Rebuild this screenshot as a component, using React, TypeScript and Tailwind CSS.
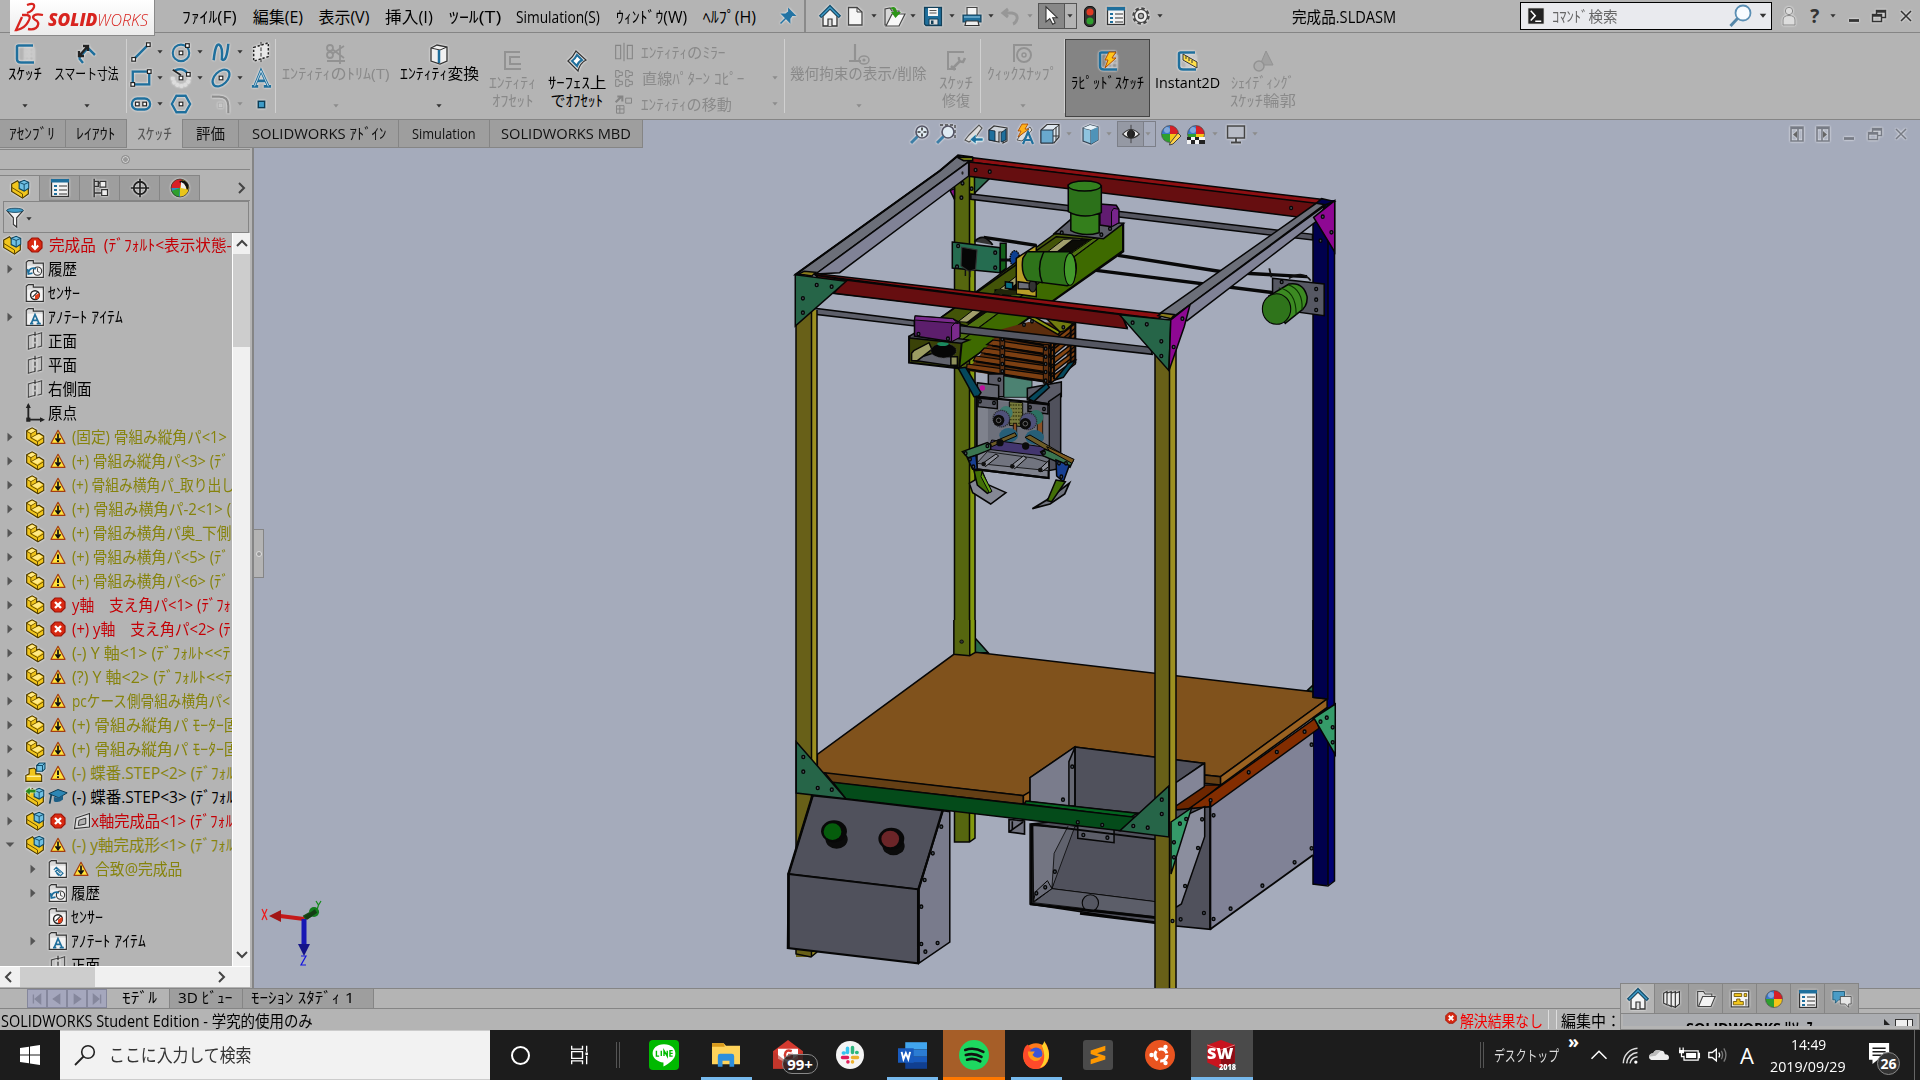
import { useLayoutEffect, useRef, type ReactNode } from "react";

/* Squeezes or stretches one line of text to the width of its box. */
function Fit({ children, className = "", w }: { children: ReactNode; className?: string; w?: number }) {
  const box = useRef<HTMLSpanElement>(null);
  const ink = useRef<HTMLSpanElement>(null);
  useLayoutEffect(() => {
    if (box.current && ink.current) {
      ink.current.style.transform = "none";
      const n = ink.current.offsetWidth;
      if (n > 0) ink.current.style.transform = `scaleX(${box.current.clientWidth / n})`;
    }
  });
  return (
    <span ref={box} style={w ? { width: w } : undefined} className={`block shrink-0 whitespace-pre ${className}`}>
      <span ref={ink} className="inline-block origin-left">{children}</span>
    </span>
  );
}

function Ico({ children, className = "size-6", box = "0 0 24 24" }: { children: ReactNode; className?: string; box?: string }) {
  return (
    <svg viewBox={box} className={`block shrink-0 overflow-visible ${className}`} fill="none">
      {children}
    </svg>
  );
}

const Arr = ({ className = "", dim = false }: { className?: string; dim?: boolean }) => (
  <Ico box="0 0 8 8" className={`size-2 ${className}`}>
    <path d="M1.4 2.2H6.6L4 5.4Z" fill={dim ? "#8c8c8c" : "#333"} />
  </Ico>
);

const B = "#1f6f9c";
const halo = "drop-shadow-[0_0_1px_#fff]";

/* ---------- shared icons ---------- */
const Home = () => (
  <Ico className={`size-6 ${halo}`}>
    <path d="M5 12V22H19V12L12 5Z" fill="#f4f4f4" stroke="#333" strokeWidth="1.3" />
    <path d="M2 13L12 3L22 13" stroke="#16506f" strokeWidth="3.4" />
    <path d="M3 12.2L12 3.5L21 12.2" stroke="#3f9cc8" strokeWidth="1.3" />
    <path d="M10 22V15H14V22" stroke="#333" strokeWidth="1.2" fill="#ddd" />
  </Ico>
);
const Panel = () => (
  <Ico className={`size-6 ${halo}`}>
    <rect x="3.5" y="3.5" width="17" height="17" fill="#f4f4f4" stroke="#333" strokeWidth="1.3" />
    <rect x="3" y="3" width="18" height="3.5" fill={B} />
    <path d="M6 9h3v2H6zM6 13h3v2H6zM6 17h3v2H6z" fill={B} />
    <path d="M11 10h8M11 14h8M11 18h8" stroke="#333" strokeWidth="1.2" />
  </Ico>
);
const Ball = ({ extra }: { extra?: ReactNode }) => (
  <Ico>
    <circle cx="12" cy="12" r="8.5" fill="#eee" />
    <path d="M12 12V3.5A8.5 8.5 0 0 1 20.5 12Z" fill="#d81f26" />
    <path d="M12 12H3.5A8.5 8.5 0 0 1 12 3.5Z" fill="#3c78c8" />
    <path d="M12 12H3.5A8.5 8.5 0 0 0 12 20.5Z" fill="#2ea02e" />
    <path d="M12 12H20.5A8.5 8.5 0 0 1 12 20.5Z" fill="#f5c518" />
    <circle cx="9" cy="8" r="3" fill="#fff" opacity=".35" />
    <circle cx="12" cy="12" r="8.5" stroke="#444" strokeWidth=".7" />
    {extra}
  </Ico>
);
const FeatureBall = () => (
  <Ico className={`size-6 ${halo}`}>
    <circle cx="12" cy="12" r="9" fill="#e9c51b" />
    <path d="M12 12L3 12A9 9 0 0 1 14 3.2Z" fill="#d81f26" />
    <path d="M12 12L3 12A9 9 0 0 0 12 21Z" fill="#2e8fc2" />
    <path d="M12 12L3.4 15A9 9 0 0 0 11 21Z" fill="#2ea02e" />
    <path d="M11 6Q15 2 19.500 7Q22 12 19 14Q18 8 11 6Z" fill="#111" />
    <path d="M13 6Q18 8 18 13L13 12Z" fill="#eee" />
    <circle cx="12" cy="12" r="9" stroke="#333" strokeWidth=".8" />
  </Ico>
);
const Part = () => (
  <Ico className={`size-5 ${halo}`}>
    <path d="M2 4.500L8.500 1L14 4V8.500L17 7.500L22.500 11V18.500L15.500 22.500L2 14Z" fill="#f2c61c" stroke="#4a3800" strokeWidth="1.4" />
    <path d="M2 5L7 8V13L15 17.500V22M7 8L14 4M7 13L14 9M15 17.500L22 13" stroke="#6a5000" strokeWidth="1.2" />
    <path d="M3.500 5L8.500 2.200L12.700 4.300L7.300 7.300ZM8.500 12.500L16.500 8.800L21 11.500L15 15.800Z" fill="#ffe984" />
  </Ico>
);
const Asm = ({ arrow = false }: { arrow?: boolean }) => (
  <Ico className={`size-5 ${halo}`}>
    <path d="M2 6L9 2L14 8L22 11V18L15 23L2 15Z" fill="#f2c61c" stroke="#4a3800" strokeWidth="1.4" />
    <path d="M2 10L15 18V23" stroke="#6a5000" strokeWidth="1.2" />
    <path d="M11 4L17 1.500L22.500 4V11L17 14.500L11 11.500Z" fill="#6fc0e4" stroke="#0c4460" strokeWidth="1.3" />
    <path d="M11 4L17 6.500L22.500 4M17 6.500V14.500" stroke="#0c4460" strokeWidth="1.1" />
    {arrow && <path d="M0 5L6 0V3H13V7H6V10Z" fill="#2b8a1c" stroke="#e8ffe0" strokeWidth=".6" />}
  </Ico>
);
const StepPart = () => (
  <Ico className={`size-5 ${halo}`}>
    <path d="M1 22V15L5 13V7L11 6L13 8V13H18L20 15V22Z" fill="#f2c61c" stroke="#4a3800" strokeWidth="1.4" />
    <path d="M2 16H19" stroke="#fff2a0" strokeWidth="1.5" />
    <path d="M14 3L17 0H24V7L21 10H14Z" fill="#6fc0e4" stroke="#0c4460" strokeWidth="1.3" />
    <path d="M14 3H21V10M21 3L24 0" stroke="#0c4460" strokeWidth="1.1" />
  </Ico>
);
const Warn = ({ bang = false }: { bang?: boolean }) => (
  <Ico className="size-4" box="0 0 16 16">
    <path d="M8 1.300L15 14.300H1Z" fill="#ffe23a" stroke="#a33c10" strokeWidth="1.2" strokeLinejoin="round" />
    {bang ? <path d="M8 5.500V10M8 11.300V13" stroke="#111" strokeWidth="1.9" /> : <path d="M8 4.500V12M5.500 9.300L8 12.500L10.500 9.300" stroke="#111" strokeWidth="1.7" />}
  </Ico>
);
const Err = ({ down = false, small = false }: { down?: boolean; small?: boolean }) => (
  <Ico className={small ? "size-3" : "size-4"} box="0 0 16 16">
    <path d="M5 1H11L15 5V11L11 15H5L1 11V5Z" fill="#d92a12" stroke="#a01408" strokeWidth="1.2" />
    {down ? <path d="M8 3.500V11M4.800 8.500L8 12L11.200 8.500" stroke="#fff" strokeWidth="2.100" /> : <path d="M5 5L11 11M11 5L5 11" stroke="#fff" strokeWidth="2.400" />}
  </Ico>
);
const Folder = ({ kind }: { kind: string }) => (
  <Ico className={`size-5 ${halo}`}>
    <path d="M1.500 22V4L4 2H10V5H22V22Z" fill="#d9d9d9" stroke="#333" strokeWidth="1.4" />
    <path d="M3 8H21V21H3Z" fill="#f3f3f3" />
    {kind === "history" && (
      <>
        <circle cx="15" cy="14.500" r="5" stroke="#333" strokeWidth="1.3" />
        <path d="M15 11V15L17.500 16" stroke="#333" />
        <path d="M4 17C5 11 10 10 13 12M3 12L4 18L9 17" stroke={B} strokeWidth="2" />
      </>
    )}
    {kind === "sensor" && (
      <>
        <circle cx="12" cy="14.500" r="5.300" fill="#fff" stroke="#222" strokeWidth="1.7" />
        <path d="M12 15L17 12A5 5 0 0 1 12 19.500Z" fill="#e0401c" />
        <path d="M9 17L15 11" stroke="#222" strokeWidth="1.3" />
      </>
    )}
    {kind === "note" && <path d="M6 20H10M14 20H19M7.500 20L12 9L17 20M9.300 16H15" stroke={B} strokeWidth="2" />}
    {kind === "mate" && <path d="M7 13L10 10L18 17L15 20L9 15L11 13L15 17M10 17L13 20" stroke={B} strokeWidth="1.4" />}
  </Ico>
);
const Plane = () => (
  <Ico className={`size-5 ${halo}`}>
    <path d="M9 4.500L4 6V22L9 20.500M15 3.500L20 2V18L15 19.500M4 6L9 4.500M20 2L15 3.500M9 20.500L12 19.700M9 4.500L15 3.500" stroke="#444" strokeWidth="1.3" fill="#c2c2c2" />
    <path d="M12 1V22" stroke="#222" strokeWidth="1.3" strokeDasharray="5 2" />
  </Ico>
);
const Origin = () => (
  <Ico className="size-5">
    <path d="M4 2V20H21" stroke="#222" strokeWidth="2.200" />
    <path d="M1 6L4 0L7 6ZM18 17L24 20L18 23Z" fill="#222" />
    <rect x="1.500" y="17.500" width="5" height="5" fill="#222" />
  </Ico>
);

/* ---------- title bar ---------- */
const menus: [string, string][] = [
  ["ﾌｧｲﾙ(F)", "w-[55px]"],
  ["編集(E)", "w-[50px]"],
  ["表示(V)", "w-[51px]"],
  ["挿入(I)", "w-[48px]"],
  ["ﾂｰﾙ(T)", "w-[52px]"],
  ["Simulation(S)", "w-[84px]"],
  ["ｳｨﾝﾄﾞｳ(W)", "w-[71px]"],
  ["ﾍﾙﾌﾟ(H)", "w-[53px]"],
];

function Restore({ color = "#333" }: { color?: string }) {
  return (
    <Ico className={`size-6 ${halo}`}>
      <path d="M9.500 10V6.500H18.500V13.500H15M9.500 8H18.500" stroke={color} strokeWidth="1.5" />
      <path d="M5.500 10.500H14.500V17.500H5.500ZM5.500 12H14.500" stroke={color} strokeWidth="1.5" />
    </Ico>
  );
}
const Min = ({ color = "#333" }: { color?: string }) => (
  <Ico className={`size-6 ${halo}`}><path d="M7 16.500H17" stroke={color} strokeWidth="2.800" /></Ico>
);
const Close = ({ color = "#333" }: { color?: string }) => (
  <Ico className={`size-6 ${halo}`}><path d="M7 7L17 17M17 7L7 17" stroke={color} strokeWidth="1.6" /></Ico>
);

function TitleBar() {
  return (
    <header className="flex h-[33px] items-center border-b border-[#858585] text-[16px] leading-[28px] text-black">
      <div className="relative z-10 ml-[10px] flex h-[36px] w-[145px] shrink-0 items-center self-start border-r border-b border-[#8a8a8a] bg-gradient-to-b from-white to-[#ececec] text-[#d8241f]">
        <Ico className="ml-[5px] h-[28px] w-[29px]" box="0 0 29 28">
          <path d="M12 1Q20 -2 19 3Q18 7 12 9" stroke="#d8241f" strokeWidth="2.300" />
          <path d="M7 11H12Q17 12 13 18Q10 24 2 26H1L7 13" stroke="#d8241f" strokeWidth="2.300" />
          <path d="M28 11Q19 9 18 13Q18 15 22 17Q25 20 21 24Q18 26 13 25" stroke="#d8241f" strokeWidth="2.300" />
        </Ico>
        <Fit className="ml-[4px] w-[49px] pt-1 text-[17px] font-extrabold italic">SOLID</Fit>
        <Fit className="w-[51px] pt-1 text-[17px] font-light italic">WORKS</Fit>
      </div>
      <nav className="ml-[27px] flex gap-x-[15.700px] pt-px">
        {menus.map(([t, w]) => (
          <Fit key={t} className={w}>{t}</Fit>
        ))}
      </nav>
      <Ico className={`ml-[22px] size-5 ${halo}`}>
        <path d="M13 4L20 11L17 11L14 15L14 19L5 10L9 10L13 7ZM9 15L3 21" fill="#2474a4" stroke="#2474a4" strokeWidth="1.8" />
      </Ico>
      <div className="ml-[6px] h-[32px] w-[2px] bg-[#8a8a8a]" />
      <div className="ml-[12px] flex items-center">
        <Home />
        <Ico className={`ml-px size-6 ${halo}`}><path d="M5.500 3.500H14L19 8V21H5.500Z" fill="#f6f6f6" stroke="#444" strokeWidth="1.3" /><path d="M14 3.500V8H19" stroke="#444" /></Ico>
        <Arr className="ml-[3px]" />
        <Ico className={`ml-1 size-6 ${halo}`}><path d="M3 21V5L8 4L10 7H17V21Z" fill="#d8d8d8" stroke="#444" strokeWidth="1.2" /><path d="M4 22L10 10H23L17 22Z" fill="#f8f8f8" stroke="#444" strokeWidth="1.2" /><path d="M8 4Q14 1 15 8H19L13.500 14L9 8H12Q11 5 8 4Z" fill="#2d9418" /></Ico>
        <Arr className="ml-[3px]" />
        <Ico className={`ml-1 size-6 ${halo}`}><path d="M3.500 3.500H20.500V21.500H5L3.500 20Z" fill={B} stroke="#123f58" strokeWidth="1.3" /><path d="M7 4H17V12H7Z" fill="#f4f4f4" /><path d="M8.500 6.500H15.500M8.500 9H15.500" stroke="#555" /><path d="M8 15H17V21H8Z" fill="#ddd" stroke="#123f58" /><path d="M10 16.500H12.500V20H10Z" fill="#123f58" /></Ico>
        <Arr className="ml-[3px]" />
        <Ico className={`ml-1 size-6 ${halo}`}><path d="M7 11V3.500H17V11" fill="#f4f4f4" stroke="#444" strokeWidth="1.2" /><path d="M3 11H21V18H3Z" fill={B} stroke="#123f58" strokeWidth="1.2" /><path d="M4 13H20" stroke="#9bd0ea" /><path d="M6 17H18L19 21.500H5Z" fill="#eee" stroke="#333" strokeWidth="1.2" /></Ico>
        <Arr className="ml-[3px]" />
        <Ico className="ml-1 size-6"><path d="M9 5L4 9L9 13M5 9H13Q19 10 18 15Q17 19 14 20" stroke="#979797" strokeWidth="3" /></Ico>
        <Arr dim className="ml-[3px]" />
        <div className="ml-[4px] flex h-[26px] w-[39px] items-center border border-[#555] bg-[#b4b4b4]">
          <div className="flex h-full w-[26px] items-center justify-center border-r border-[#555] bg-[#888]">
            <Ico className="size-5"><path d="M6 1V19L10.500 15L14 22L17 20.500L14 14H19.500Z" fill="#fff" stroke="#333" strokeWidth="1.3" /></Ico>
          </div>
          <Arr className="ml-px" />
        </div>
        <Ico className="ml-px size-6"><rect x="6.500" y="2.500" width="11" height="20" rx="4.500" fill="#333" stroke="#111" /><circle cx="12" cy="8" r="3.500" fill="#e03a24" /><circle cx="12" cy="17" r="3.500" fill="#2f9e2f" /></Ico>
        <div className="ml-[2px]"><Panel /></div>
        <Ico className={`ml-px size-6 ${halo}`}><circle cx="12" cy="12" r="7.500" stroke="#444" strokeWidth="2.500" strokeDasharray="3.400 2.500" /><circle cx="12" cy="12" r="6.500" fill="#eee" stroke="#444" strokeWidth="1.2" /><circle cx="12" cy="12" r="2.600" fill="#b4b4b4" stroke="#444" strokeWidth="1.2" /></Ico>
        <Arr className="ml-[3px]" />
      </div>
      <Fit className="ml-[128px] w-[104px] pt-px text-[16px]">完成品.SLDASM</Fit>
      <div className="ml-[124px] flex h-[28px] w-[252px] shrink-0 items-center border border-black bg-[#e9eaee]">
        <Ico className="ml-[6px] size-[18px]"><rect x="1" y="1" width="22" height="22" fill="#222" stroke="#eee" strokeWidth="1.5" /><path d="M5 5L11 11.500L5 18M11 19H19" stroke="#fff" strokeWidth="2" /></Ico>
        <Fit className="ml-[7px] w-[66px] text-[15px] leading-[24px] text-[#666]">ｺﾏﾝﾄﾞ検索</Fit>
        <Ico className="ml-[110px] size-6"><circle cx="15" cy="9" r="7.500" fill="#f7fbff" stroke="#5b8fb4" strokeWidth="1.800" /><path d="M9.500 14.500L2.500 22" stroke="#5586a8" strokeWidth="3" /></Ico>
        <Arr className="ml-[7px] scale-125" />
      </div>
      <Ico className={`ml-[5px] size-6 ${halo}`}><circle cx="12" cy="7" r="3.700" fill="#ddd" stroke="#888" /><path d="M6 21V16Q6 11.500 12 11.500Q18 11.500 18 16V21Z" fill="#ddd" stroke="#888" /></Ico>
      <span className="ml-[6px] w-4 text-center text-[19px] font-bold text-[#333]">?</span>
      <Arr className="ml-[6px]" />
      <div className="ml-[5px]"><Min /></div>
      <div className="ml-px"><Restore /></div>
      <div className="ml-[3px]"><Close /></div>
    </header>
  );
}

/* ---------- ribbon ---------- */
function Cmd({ w, icon, lines, low = false, arrow = false, dim = false, on = false }: { w: string; icon: ReactNode; lines: [string, string][]; low?: boolean; arrow?: boolean; dim?: boolean; on?: boolean }) {
  return (
    <div className={`relative flex h-full shrink-0 flex-col items-center ${w} ${dim ? "text-[#8a8a8a]" : "text-black"}`}>
      {on && <div className="absolute inset-x-0 top-[6px] bottom-[2px] border border-[#444] bg-[#848484]" />}
      <div className={`relative flex flex-col items-center ${low ? "pt-[16px]" : "pt-[9px]"}`}>
        <div className={dim ? "opacity-70" : halo}>{icon}</div>
        {lines.map(([t, lw]) => (
          <Fit key={t} className={`text-[15px] leading-[18px] ${lw} ${low ? "" : "-mt-[2px]"}`}>{t}</Fit>
        ))}
      </div>
      {arrow && <Arr dim={dim} className="absolute top-[69px]" />}
    </div>
  );
}
const Sep = () => <div className="my-[6px] w-px shrink-0 bg-[#d0d0d0]" />;

const SketchI = ({ c = B, children }: { c?: string; children?: ReactNode }) => (
  <Ico>
    <path d="M12 6H21V19H12Z" stroke="#c8c8c8" strokeWidth=".8" />
    <path d="M16 6V19M12 10H21M12 14H21" stroke="#c8c8c8" strokeWidth=".8" />
    <path d="M20 3.500H5.500Q4 3.500 4 5V17Q4 20.500 8 20.500H21" stroke={c} strokeWidth="2.600" />
    {children}
  </Ico>
);
const sq = (x: number, y: number) => <rect x={x - 2} y={y - 2} width="4" height="4" fill="#fff" stroke="#222" strokeWidth="1.3" />;
const Tool = ({ children, arrow, dim = false }: { children: ReactNode; arrow?: boolean; dim?: boolean }) => (
  <div className="flex h-[26px] w-10 items-center">
    <Ico className={`size-[22px] ${halo}`}>{children}</Ico>
    {arrow && <Arr dim={dim} className="ml-[4px]" />}
  </div>
);
function ToolGrid() {
  return (
    <div className="grid h-[78px] w-[148px] shrink-0 grid-cols-[40px_40px_40px_28px] pt-[6px] pl-[3px]">
      <Tool arrow><path d="M4 20L20 4" stroke={B} strokeWidth="2.800" />{sq(4, 20)}{sq(20, 4)}</Tool>
      <Tool arrow><circle cx="12" cy="13" r="9" stroke={B} strokeWidth="2.300" />{sq(12, 13)}{sq(19, 5)}</Tool>
      <Tool arrow><path d="M4 21Q6 2 10 4T13 20Q18 24 20 3" stroke={B} strokeWidth="2.800" /></Tool>
      <Tool><path d="M4 7L20 2V17L4 22Z" fill="#e8e8e8" stroke="#222" strokeWidth="1.6" strokeDasharray="2.500 2" /><path d="M12 1V23" stroke="#222" strokeDasharray="4 2" /></Tool>
      <Tool arrow><rect x="3" y="5" width="18" height="14" stroke={B} strokeWidth="2.600" />{sq(3, 19)}{sq(21, 5)}</Tool>
      <Tool arrow><path d="M3 11A9 9 0 1 0 21 12" stroke="#ddd" strokeWidth="4" strokeDasharray="3 1.500" /><path d="M5 4Q14 0 19 7" stroke={B} strokeWidth="2.600" />{sq(12, 12)}{sq(20, 8)}<path d="M3 3L12 9" stroke="#222" strokeWidth="2" /></Tool>
      <Tool arrow><ellipse cx="12" cy="12" rx="11" ry="7" transform="rotate(-45 12 12)" stroke={B} strokeWidth="2.500" />{sq(12, 12)}</Tool>
      <Tool><path d="M2 21H9M15 21H23M5 21L12 4L20 21M8 15H17" stroke={B} strokeWidth="3" /><path d="M5 21L12 4L20 21" stroke="#fff" strokeWidth=".8" /></Tool>
      <Tool arrow><rect x="2" y="6" width="20" height="12" rx="6" stroke={B} strokeWidth="2.500" />{sq(8, 12)}{sq(16, 12)}</Tool>
      <Tool><path d="M7 3H17L22 12L17 21H7L2 12Z" stroke={B} strokeWidth="2.500" />{sq(12, 12)}</Tool>
      <Tool arrow dim><path d="M2 4H10Q20 4 20 14V22" stroke="#8c8c8c" strokeWidth="2.400" /><path d="M9 11H14V16H9Z" stroke="#aaa" /></Tool>
      <Tool><rect x="9" y="9" width="7" height="7" fill="#3f9cc8" stroke="#0c3c56" strokeWidth="1.600" /></Tool>
    </div>
  );
}
const G = "#858585";
function Ribbon() {
  return (
    <section className="flex h-[86px] shrink-0">
      <Cmd w="w-[50px]" icon={<SketchI />} lines={[["ｽｹｯﾁ", "w-[34px]"]]} arrow />
      <Cmd w="w-[73px]" icon={<Ico><path d="M4 16L8 21M4 16L13 6L20 13" stroke={B} strokeWidth="2.500" /><path d="M5 13L12 5M4 9V14H9M8 4H13V9" stroke="#222" strokeWidth="2.400" /></Ico>} lines={[["スマート寸法", "w-[65px]"]]} arrow />
      <div className="w-[3px]" />
      <Sep />
      <ToolGrid />
      <Sep />
      <div className="w-[2px]" />
      <Cmd dim w="w-[116px]" icon={<Ico><circle cx="6" cy="6" r="3" stroke={G} strokeWidth="1.800" /><circle cx="6" cy="13" r="3" stroke={G} strokeWidth="1.800" /><path d="M8 7L20 16M8 12L20 4M3 19H21M16 3V22" stroke={G} strokeWidth="1.800" /></Ico>} lines={[["ｴﾝﾃｨﾃｨのﾄﾘﾑ(T)", "w-[108px]"]]} arrow />
      <Cmd w="w-[90px]" icon={<Ico><path d="M4 6L10 3L20 5V19L13 22L4 19Z" fill="#f1f1f1" stroke="#333" strokeWidth="1.3" /><path d="M4 6L13 8L20 5" stroke="#333" /><path d="M12 8V21" stroke={B} strokeWidth="2.500" /></Ico>} lines={[["ｴﾝﾃｨﾃｨ変換", "w-[79px]"]]} arrow />
      <Cmd dim low w="w-[57px]" icon={<Ico><path d="M19 3H4V20H20M19 8H9V15H20" stroke={G} strokeWidth="2" /></Ico>} lines={[["ｴﾝﾃｨﾃｨ", "w-[47px]"], ["ｵﾌｾｯﾄ", "w-[42px]"]]} />
      <Cmd low w="w-[72px]" icon={<Ico><path d="M3 12Q8 8 11 2L21 11Q15 14 13 22Z" fill="#ddd" stroke="#333" strokeWidth="1.3" /><path d="M7 12Q10 10 12 6L17 11Q13 13 12 17Z" fill="#fff" stroke={B} strokeWidth="2" /></Ico>} lines={[["ｻｰﾌｪｽ上", "w-[59px]"], ["でｵﾌｾｯﾄ", "w-[53px]"]]} />
      <div className="flex w-[171px] shrink-0 flex-col pt-[6px] pl-px text-[15px] leading-[26px] text-[#8a8a8a]">
        <div className="flex h-[26px] items-center"><Ico className="size-5"><path d="M2 4V20H8V4ZM22 4V20H16V4ZM12 1V23" stroke={G} strokeWidth="1.300" /></Ico><Fit className="ml-[7px] w-[85px]">ｴﾝﾃｨﾃｨのﾐﾗｰ</Fit></div>
        <div className="flex h-[26px] items-center"><Ico className="size-5"><path d="M2 3H6V5H10V9H6V11H2ZM14 3H18V5H22V9H18V11H14ZM2 14H6V16H10V20H6V22H2ZM14 14H18V16H22V20H18V22H14Z" stroke={G} strokeWidth="1.200" /></Ico><Fit className="ml-[8px] w-[102px]">直線ﾊﾟﾀｰﾝ ｺﾋﾟｰ</Fit><Arr dim className="ml-[27px]" /></div>
        <div className="flex h-[26px] items-center"><Ico className="size-5"><path d="M2 10L9 3M4 3H10V9" stroke={G} strokeWidth="2.500" /><path d="M14 5H21V11H14ZM3 14H12V23H3ZM7 14V23M3 18H12" stroke={G} strokeWidth="1.200" /></Ico><Fit className="ml-[7px] w-[91px]">ｴﾝﾃｨﾃｨの移動</Fit><Arr dim className="ml-[39px]" /></div>
      </div>
      <Sep />
      <Cmd dim w="w-[147px]" icon={<Ico><path d="M8 2V19M2 19H14" stroke={G} strokeWidth="2.200" /><ellipse cx="17" cy="18" rx="5" ry="4" stroke={G} strokeWidth="1.500" /><circle cx="17" cy="18" r="1.600" fill={G} /></Ico>} lines={[["幾何拘束の表示/削除", "w-[137px]"]]} arrow />
      <Cmd dim low w="w-[48px]" icon={<Ico><path d="M20 3H4V20H12" stroke={G} strokeWidth="2" /><path d="M9 19L16 12M15 8Q14 13 19 13L21 9M7 17L11 21" stroke={G} strokeWidth="2.500" /></Ico>} lines={[["ｽｹｯﾁ", "w-[34px]"], ["修復", "w-[28px]"]]} />
      <Sep />
      <Cmd dim w="w-[83px]" icon={<Ico><path d="M3 20V3H21" stroke={G} strokeWidth="2" /><circle cx="13" cy="13" r="7" stroke={G} strokeWidth="2" /><circle cx="13" cy="13" r="2" stroke={G} strokeWidth="1.500" /></Ico>} lines={[["ｸｨｯｸｽﾅｯﾌﾟ", "w-[71px]"]]} arrow />
      <Sep />
      <Cmd on low w="w-[85px]" icon={<SketchI><path d="M13 3H20L16 9H20L9 19L12 11H9Z" fill="#ffc61a" stroke="#b04a00" /></SketchI>} lines={[["ﾗﾋﾟｯﾄﾞｽｹｯﾁ", "w-[73px]"]]} />
      <Cmd low w="w-[74px]" icon={<SketchI><path d="M8 5L22 13V19L8 11Z" fill="#ffe04a" stroke="#333" /><path d="M11 7V10M14 9V12M17 11V14" stroke="#333" /></SketchI>} lines={[["Instant2D", "w-[65px]"]]} />
      <Cmd dim low w="w-[78px]" icon={<Ico><path d="M15 2L22 16H9Z" fill="#999" stroke={G} /><circle cx="8" cy="17" r="5" fill="#aaa" stroke={G} strokeWidth="1.500" /></Ico>} lines={[["ｼｪｲﾃﾞｨﾝｸﾞ", "w-[64px]"], ["ｽｹｯﾁ輪郭", "w-[66px]"]]} />
    </section>
  );
}

/* ---------- ribbon tabs + view toolbar ---------- */
const tabs: [string, string, string, boolean][] = [
  ["ｱｾﾝﾌﾞﾘ", "w-[66px] pr-[2px]", "w-[46px]", false],
  ["ﾚｲｱｳﾄ", "w-[61px]", "w-[40px]", false],
  ["ｽｹｯﾁ", "w-[56px]", "w-[35px]", true],
  ["評価", "w-[56px]", "w-[29px]", false],
  ["SOLIDWORKS ｱﾄﾞｲﾝ", "w-[160px]", "w-[134px]", false],
  ["Simulation", "w-[91px]", "w-[64px]", false],
  ["SOLIDWORKS MBD", "w-[153px]", "w-[130px]", false],
];
const Lens = ({ dash = false }: { dash?: boolean }) => (
  <Ico className={`size-6 ${halo}`}>
    {dash && <path d="M6 3H21V18" stroke="#444" strokeWidth="1.3" strokeDasharray="3 2" />}
    <circle cx="14" cy="10" r="6" fill="#dfeaf2" stroke="#556" strokeWidth="1.700" />
    {!dash && <path d="M14 5.500V14.500M9.500 10H18.500" stroke="#333" strokeWidth="1.600" strokeDasharray="3 3" />}
    <path d="M9.500 14.500L3 21" stroke="#3d7ea6" strokeWidth="3" />
  </Ico>
);
function TabRow() {
  return (
    <div className="flex h-[29px] shrink-0 bg-[#a5abbb]">
      {tabs.map(([t, w, tw, on]) => (
        <div key={t} className={`flex shrink-0 items-center justify-center border-r border-[#858585] pb-[2px] text-[15px] leading-[24px] ${w} ${on ? "bg-[#b4b4b4] text-[#555]" : "border-y bg-[#9e9e9e] text-[#111]"}`}>
          <Fit className={tw}>{t}</Fit>
        </div>
      ))}
      <div className="flex flex-1 items-center border-t border-[#858585] pl-[265px]">
        <Lens />
        <div className="ml-[2px]"><Lens dash /></div>
        <Ico className={`ml-[3px] size-6 ${halo}`}><path d="M4 18L8 13L18 3L21 6L14 16L8 20Z" fill="#ddd" stroke="#555" strokeWidth="1.200" /><path d="M22 16H15V12L9 17.500L15 22V19H22Z" fill={B} stroke="#dff" strokeWidth=".6" /></Ico>
        <Ico className={`ml-px size-6 ${halo}`}><path d="M3 8L8 4L21 6V19L17 21V10L13 10V20L3 18Z" fill="#cfd4da" stroke="#333" strokeWidth="1.200" /><path d="M3 8L9 9V19L3 18ZM15 11L20 7V18L15 20Z" fill={B} stroke="#123" strokeWidth=".8" /></Ico>
        <Ico className={`ml-[2px] size-6 ${halo}`}><path d="M5 18L9 12L18 5L20 8L10 19Z" fill="#ddd" stroke="#555" /><path d="M10 2H16L13 7H17L6 15L9 9H6Z" fill="#ffb01a" stroke="#a04000" strokeWidth=".8" /><path d="M11 22L16 10L21 22M13 18H19" stroke={B} strokeWidth="2.200" /></Ico>
        <Ico className={`ml-[2px] size-6 ${halo}`}><path d="M3 8L9 2.500H21V15L16 21H3Z" fill="#dde6ee" stroke="#333" strokeWidth="1.200" /><path d="M3 8H15V21H3Z" fill="#69a9cd" stroke="#234" /><path d="M15 8L21 3M18 5V18M15 14H21" stroke="#333" /></Ico>
        <Arr dim className="ml-[3px]" />
        <Ico className={`ml-[5px] size-6 ${halo}`}><path d="M5 6L12 3L20 5V18L13 22L5 19Z" fill="#8fc4df" stroke="#345" strokeWidth="1.200" /><path d="M5 6L13 8V22M13 8L20 5" stroke="#345" /><path d="M13 8V22L20 18V5Z" fill="#4f93b8" /><path d="M5 6L12 3L20 5L13 8Z" fill="#e6f2f8" /></Ico>
        <Arr dim className="ml-[3px]" />
        <div className="ml-[4px] flex h-[26px] w-[39px] items-center border border-[#7c7f88] bg-[#a5abbb]">
          <div className="flex h-full w-[26px] items-center justify-center border-r border-[#7c7f88] bg-[#9599a4]">
            <Ico className="size-5"><path d="M2 12Q12 1 22 12Q12 22 2 12Z" fill="#f2f2f2" stroke="#333" strokeWidth="1.300" /><circle cx="12" cy="12" r="5" fill="#222" /><path d="M12 1V23" stroke="#333" /></Ico>
          </div>
          <Arr dim />
        </div>
        <div className="ml-[2px]"><Ball extra={<path d="M12 21L20 11L23 14L15 22L11.500 23Z" fill="#ffd24a" stroke="#444" />} /></div>
        <div className="ml-[2px]"><Ball extra={<><path d="M3 15H21V22H3Z" fill="#f4f4f4" /><path d="M3 15h4v3H3zM11 15h4v3h-4zM7 18h4v4H7zM15 18h6v4h-6z" fill="#222" /></>} /></div>
        <Arr dim className="ml-[3px]" />
        <Ico className={`ml-[5px] size-6 ${halo}`}><rect x="3.500" y="4" width="17" height="12" fill="#b8bcc6" stroke="#444" strokeWidth="1.500" /><path d="M12 16V20M7 20.500H17" stroke="#444" strokeWidth="1.800" /></Ico>
        <Arr dim className="ml-[3px]" />
        <div className="ml-auto flex items-center gap-x-[2px] pr-[7px]">
          <Ico className={`size-6 ${halo}`}><path d="M6 5H18V19H6ZM6 6.500H18M13 6V19" stroke="#777b85" strokeWidth="1.600" /><path d="M12 9V16L8 12.500Z" fill="#666" /></Ico>
          <Ico className={`size-6 ${halo}`}><path d="M6 5H18V19H6ZM6 6.500H18M11 6V19" stroke="#777b85" strokeWidth="1.600" /><path d="M12 9V16L16 12.500Z" fill="#666" /></Ico>
          <Min color="#777b85" />
          <Restore color="#777b85" />
          <Close color="#777b85" />
        </div>
      </div>
    </div>
  );
}

/* ---------- feature tree ---------- */
type Row = { t: string; w: number; i: string; s?: string; c?: string; a?: string; lv?: number };
const Y = "text-[#86830c]";
const R = "text-[#c40006]";
const rows: Row[] = [
  { t: "履歴", w: 29, i: "history", a: ">" },
  { t: "ｾﾝｻｰ", w: 32, i: "sensor" },
  { t: "ｱﾉﾃｰﾄ ｱｲﾃﾑ", w: 75, i: "note", a: ">" },
  { t: "正面", w: 29, i: "plane" },
  { t: "平面", w: 29, i: "plane" },
  { t: "右側面", w: 44, i: "plane" },
  { t: "原点", w: 29, i: "origin" },
  { t: "(固定) 骨組み縦角パ<1>", w: 155, i: "part", s: "w", c: Y, a: ">" },
  { t: "(+) 骨組み縦角パ<3> (ﾃﾞ", w: 157, i: "part", s: "w", c: Y, a: ">" },
  { t: "(+) 骨組み横角パ_取り出し", w: 163, i: "part", s: "w", c: Y, a: ">" },
  { t: "(+) 骨組み横角パ-2<1> (", w: 159, i: "part", s: "w", c: Y, a: ">" },
  { t: "(+) 骨組み横角パ奥_下側", w: 159, i: "part", s: "w", c: Y, a: ">" },
  { t: "(+) 骨組み横角パ<5> (ﾃﾞ", w: 157, i: "part", s: "b", c: Y, a: ">" },
  { t: "(+) 骨組み横角パ<6> (ﾃﾞ", w: 157, i: "part", s: "b", c: Y, a: ">" },
  { t: "y軸　支え角パ<1> (ﾃﾞﾌｫ", w: 159, i: "part", s: "e", c: R, a: ">" },
  { t: "(+) y軸　支え角パ<2> (ﾃ", w: 159, i: "part", s: "e", c: R, a: ">" },
  { t: "(-) Y 軸<1> (ﾃﾞﾌｫﾙﾄ<<ﾃ", w: 159, i: "part", s: "w", c: Y, a: ">" },
  { t: "(?) Y 軸<2> (ﾃﾞﾌｫﾙﾄ<<ﾃ", w: 160, i: "part", s: "w", c: Y, a: ">" },
  { t: "pcケース側骨組み横角パ<", w: 158, i: "part", s: "w", c: Y, a: ">" },
  { t: "(+) 骨組み縦角パ ﾓｰﾀｰ固", w: 168, i: "part", s: "w", c: Y, a: ">" },
  { t: "(+) 骨組み縦角パ ﾓｰﾀｰ固", w: 168, i: "part", s: "w", c: Y, a: ">" },
  { t: "(-) 蝶番.STEP<2> (ﾃﾞﾌｫﾙ", w: 162, i: "step", s: "b", c: Y, a: ">" },
  { t: "(-) 蝶番.STEP<3> (ﾃﾞﾌｫﾙ", w: 162, i: "asma", s: "g", a: ">" },
  { t: "x軸完成品<1> (ﾃﾞﾌｫﾙ", w: 142, i: "asm", s: "ex", c: R, a: ">" },
  { t: "(-) y軸完成形<1> (ﾃﾞﾌｫﾙ", w: 162, i: "asm", s: "w", c: Y, a: "v" },
  { t: "合致@完成品", w: 87, i: "mate", s: "w", c: Y, a: ">", lv: 1 },
  { t: "履歴", w: 29, i: "history", a: ">", lv: 1 },
  { t: "ｾﾝｻｰ", w: 32, i: "sensor", lv: 1 },
  { t: "ｱﾉﾃｰﾄ ｱｲﾃﾑ", w: 75, i: "note", a: ">", lv: 1 },
  { t: "正面", w: 29, i: "plane", lv: 1 },
];
function RowIcon({ i }: { i: string }) {
  if (i === "part") return <Part />;
  if (i === "asm") return <Asm />;
  if (i === "asma") return <Asm arrow />;
  if (i === "step") return <StepPart />;
  if (i === "plane") return <Plane />;
  if (i === "origin") return <Origin />;
  return <Folder kind={i} />;
}
function TreeRow({ r }: { r: Row }) {
  return (
    <div className={`flex h-6 shrink-0 items-center text-[15.500px] leading-6 ${r.lv ? "pl-[28px]" : "pl-[5px]"} ${r.c ?? "text-black"}`}>
      <Ico box="0 0 8 8" className="size-2.5">
        {r.a === ">" && <path d="M2 .5L6 4L2 7.500Z" fill="#555" />}
        {r.a === "v" && <path d="M.5 2H7.500L4 5.500Z" fill="#555" />}
      </Ico>
      <div className="ml-[10px] flex w-5 shrink-0"><RowIcon i={r.i} /></div>
      {r.s && (
        <div className="ml-[5px] flex w-4 shrink-0 justify-center">
          {r.s === "w" && <Warn />}
          {r.s === "b" && <Warn bang />}
          {(r.s === "e" || r.s === "ex") && <Err />}
          {r.s === "g" && <Ico className="size-5"><path d="M1 8L12 3L23 7L13 13Z" fill="#2c86b4" stroke="#0c3c56" strokeWidth="1.200" /><path d="M7 12V17Q12 20 18 15V10L13 13Z" fill="#1c5f86" /><path d="M4 9L2 20" stroke="#0c3c56" strokeWidth="2" /></Ico>}
        </div>
      )}
      {r.s === "ex" && <Ico className={`ml-[7px] size-[18px] ${halo}`}><path d="M4 8L22 2V20L2 22Z" fill="#ddd" stroke="#333" strokeWidth="1.500" /><path d="M8 11L17 8V16L7 18Z" fill="#b4b4b4" stroke="#333" strokeWidth="1.300" /></Ico>}
      <Fit w={r.w} className={r.s === "ex" ? "" : r.s ? "ml-[6px]" : "ml-[3px]"}>{r.t}</Fit>
    </div>
  );
}
const Chev = ({ d, className }: { d: string; className: string }) => (
  <Ico box="0 0 12 12" className={className}><path d={d} stroke="#444" strokeWidth="2" /></Ico>
);
function TreePanel() {
  return (
    <aside className="flex w-[254px] shrink-0 flex-col border-r-2 border-[#858585] bg-[#b4b4b4]">
      <div className="mt-px mr-[2px] flex h-[21px] shrink-0 items-center justify-center border-y border-[#858585]">
        <div className="size-[7px] rounded-full border border-[#ddd] bg-[#999] outline outline-[#888]" />
      </div>
      <div className="mr-[2px] mt-[5px] flex h-[26px] shrink-0">
        <div className="flex w-[40px] items-center justify-center border-t border-r border-[#858585]"><Asm /></div>
        <div className="flex w-10 items-center justify-center border-t border-r border-b border-[#858585] bg-[#9e9e9e]"><Panel /></div>
        <div className="flex w-10 items-center justify-center border-t border-r border-b border-[#858585] bg-[#9e9e9e]">
          <Ico className={`size-5 ${halo}`}><path d="M5 1V23M5 4H10V10H5M10 6H14M5 18H14" stroke="#333" strokeWidth="1.700" /><path d="M12 4h7v7h-7zM14 14h7v7h-7z" fill="#eee" stroke="#333" strokeWidth="1.400" /></Ico>
        </div>
        <div className="flex w-10 items-center justify-center border-t border-r border-b border-[#858585] bg-[#9e9e9e]">
          <Ico className={`size-5 ${halo}`}><circle cx="12" cy="12" r="7.500" stroke="#222" strokeWidth="2.200" /><path d="M12 1V23M1 12H23" stroke="#222" strokeWidth="2" /></Ico>
        </div>
        <div className="flex w-10 items-center justify-center border-t border-r border-b border-[#858585] bg-[#9e9e9e]"><FeatureBall /></div>
        <div className="flex flex-1 items-center justify-end border-b border-[#858585] pr-[2px]"><Chev d="M3 1L8 6L3 11" className="size-3" /></div>
      </div>
      <div className="mr-[3px] ml-[3px] flex h-[32px] shrink-0 items-center border border-[#858585]">
        <Ico className={`ml-px size-5 ${halo}`}><path d="M2 4L10 13V21L14 24V13L22 4" fill="#f2f2f2" stroke="#333" strokeWidth="1.400" /><ellipse cx="12" cy="4" rx="10" ry="2.500" fill="#3f9cc8" stroke="#123f58" /></Ico>
        <Arr className="mt-1" />
      </div>
      <div className="flex h-[733px] shrink-0">
        <div className="flex w-[232px] shrink-0 flex-col overflow-hidden">
          <div className={`flex h-6 shrink-0 items-center pl-[2px] text-[15.500px] leading-6 ${R}`}>
            <Asm />
            <div className="ml-[5px]"><Err down /></div>
            <Fit w={182} className="ml-[6px]">完成品  (ﾃﾞﾌｫﾙﾄ&lt;表示状態-</Fit>
          </div>
          {rows.map((r, k) => <TreeRow key={k} r={r} />)}
        </div>
        <div className="flex w-[18px] shrink-0 flex-col items-center border-l border-white bg-[#f0f0f0]">
          <Chev d="M1 9L6 4L11 9" className="mt-[4px] size-3" />
          <div className="mt-[5px] h-[93px] w-full bg-[#cdcdcd]" />
          <Chev d="M1 3L6 8L11 3" className="mt-auto mb-[5px] size-3" />
        </div>
      </div>
      <div className="flex h-[21px] w-[250px] shrink-0 items-center border-t border-white bg-[#f0f0f0]">
        <Chev d="M8 1L3 6L8 11" className="ml-[3px] size-3" />
        <div className="ml-[5px] h-full w-[75px] bg-[#cdcdcd]" />
        <Chev d="M4 1L9 6L4 11" className="ml-[120px] size-3" />
      </div>
    </aside>
  );
}

/* ---------- 3D view ---------- */
function Post({ x1, xm, x2, y1, y2, a, b }: { x1: number; xm: number; x2: number; y1: number; y2: number; a: string; b: string }) {
  return (
    <>
      <path d={`M${x1} ${y1}V${y2}H${xm}V${y1}Z`} fill={a} />
      <path d={`M${xm} ${y1}V${y2}L${x2} ${y2 - 4}V${y1}Z`} fill={b} />
    </>
  );
}
const P = ({ d, f = "none", w = 1.5, s = "#060606", o = 1 }: { d: string; f?: string; w?: number; s?: string; o?: number }) => (
  <path d={d} fill={f} stroke={s} strokeWidth={w} opacity={o} vectorEffect="non-scaling-stroke" />
);
const Holes = ({ at }: { at: [number, number][] }) => (
  <>{at.map(([x, y], k) => <ellipse key={k} cx={x} cy={y} rx="4" ry="5" fill="#4b5560" stroke="#060606" strokeWidth="1.300" vectorEffect="non-scaling-stroke" />)}</>
);
const slats = [0, 1, 2, 3, 4];

function Gripper() {
  return (
    <g transform="translate(900 300) scale(.33333)">
      {/* stacked slide frame */}
      <path d="M305 88L385 66L526 70V180L452 250L200 212Z" fill="#5c2d0c" />
      <path d="M466 150L500 122V200L466 232Z" fill="#a5abbb" />
      {slats.map((k) => (
        <g key={k}>
          <P d={`M${305 - k * 26} ${96 + k * 24}L452 ${118 + k * 27}V${136 + k * 27}L${280 - k * 20} ${110 + k * 24}Z`} f="#7c3f12" w={1.2} />
          <P d={`M${300 - k * 24} ${113 + k * 24}L452 ${140 + k * 27}`} w={1.800} />
          <P d={`M452 ${128 + k * 26}L526 ${70 + k * 27}V${84 + k * 27}L452 ${146 + k * 26}Z`} f="#834412" w={1.4} />
        </g>
      ))}
      <P d="M452 122V248M526 70V190M462 124V238M512 80V200" w={2} />
      <P d="M300 106H314V222H300ZM430 134H446V250H430Z" f="#5f3112" w={1} />
      <Holes at={[[307, 118], [307, 142], [307, 168], [307, 192], [307, 214], [437, 146], [437, 170], [437, 192], [437, 216], [437, 242], [372, 74]]} />
      <P d="M385 52L400 48L480 95L475 104Z" f="#8a9410" />
      <P d="M440 56L520 70L495 92L480 96Z" f="#727c10" />
      <Holes at={[[396, 64], [490, 82]]} />
      {/* body */}
      <P d="M265 222H312V290H265Z" f="#5c5d68" />
      <P d="M312 228L396 242V292H312Z" f="#4c8272" w={0.8} />
      <P d="M232 248L296 256V296L232 290Z" f="#666873" />
      <P d="M382 265L484 246V290L446 312L382 300Z" f="#5b5c68" />
      <P d="M446 305L482 280V505L446 512Z" f="#50515c" />
      <P d="M175 205L197 202L243 278L234 290H222Z" f="#05485c" />
      <P d="M465 240L505 190L526 182L490 232Z" f="#05485c" />
      <P d="M384 296L440 250L448 262L402 304Z" f="#05485c" />
      <circle cx="247" cy="264" r="8" fill="#c010a0" />
      <P d="M230 290L446 312V534L230 508Z" f="#7f828d" w={2.2} />
      <path d="M264 300V460L446 485V318Z" fill="#6d707b" />
      <P d="M234 294L292 300V326L234 320ZM384 308L444 314V342L384 334Z" f="#5c5d68" />
      <Holes at={[[240, 304], [282, 309], [390, 322], [432, 327], [298, 239]]} />
      <P d="M328 305L368 308V380L328 376Z" f="#777a3c" w={1} />
      <path d="M330 315H368M330 326H368M330 337H368M330 348H368M330 359H368M330 370H368" stroke="#3e4014" strokeWidth="4" strokeDasharray="5 3" />
      <P d="M412 340H428V420H412ZM340 370H350V410H340Z" f="#885026" w={0.8} />
      <circle cx="318" cy="338" r="20" fill="#3d7b70" /><circle cx="408" cy="352" r="22" fill="#2c7062" />
      <ellipse cx="326" cy="406" rx="28" ry="22" fill="#275f78" /><ellipse cx="404" cy="412" rx="28" ry="22" fill="#275f78" />
      <circle cx="304" cy="356" r="25" fill="#50527a" stroke="#222" strokeWidth="4" strokeDasharray="3 3" />
      <circle cx="385" cy="364" r="25" fill="#50527a" stroke="#222" strokeWidth="4" strokeDasharray="3 3" />
      <circle cx="296" cy="361" r="17" fill="#0b0b0b" /><circle cx="376" cy="371" r="17" fill="#0b0b0b" />
      <circle cx="296" cy="361" r="7" stroke="#888" fill="none" strokeWidth="2" /><circle cx="376" cy="371" r="7" stroke="#888" fill="none" strokeWidth="2" />
      <P d="M275 420L425 440L452 450L430 468L265 448Z" f="#43366f" w={1} />
      <P d="M270 430L345 398L350 408L275 440ZM375 412L390 405L505 472L500 485Z" f="#6e5c28" w={1} />
      <circle cx="300" cy="428" r="11" fill="#0b0b0b" /><circle cx="377" cy="438" r="11" fill="#0b0b0b" />
      <P d="M262 455L400 474L446 488V512L230 490Z" f="#71747f" w={0.8} />
      <P d="M248 490L288 462L296 468L256 500ZM334 496L370 468L380 474L344 506ZM418 508L446 482V500L426 515Z" f="#8d909a" w={1} />
      <circle cx="251" cy="492" r="7" fill="#111" /><circle cx="337" cy="499" r="7" fill="#111" /><circle cx="421" cy="510" r="7" fill="#111" />
      <P d="M230 508L446 534" w={2.200} />
      {/* fingers */}
      <P d="M187 455L262 428L272 434V448L205 475Z" f="#3b7550" />
      <P d="M422 456L436 448L520 480L510 502L430 468Z" f="#3b7550" />
      <P d="M440 440L522 478L516 490L448 452Z" f="#7c5a1e" w={1} />
      <P d="M202 474L228 466L232 508H218Z" f="#173f92" />
      <P d="M468 480L508 496L490 545L470 528Z" f="#173f92" />
      <Holes at={[[197, 460], [262, 438], [210, 478], [220, 500], [432, 458], [498, 490], [477, 490], [484, 530]]} />
      <P d="M208 550L228 538L318 578L272 612L218 578Z" f="#858894" />
      <P d="M222 512L245 510L272 575L262 580L232 555Z" f="#436f08" />
      <P d="M246 516L276 574L268 578L243 530Z" f="#62a015" w={1} />
      <P d="M397 626L440 600L508 550L494 582L450 612Z" f="#71747f" w={1.8} />
      <P d="M468 540L496 545L455 605L442 602Z" f="#436f08" />
    </g>
  );
}

const belts = "M560 292L705 316M930 346L1220 396L1450 410M870 391L1356 458";

function Model() {
  return (
    <svg viewBox="254 148 1666 840" className="block h-[840px] w-[1666px]">
      <Post x1={954.5} xm={969.5} x2={975} y1={160} y2={842} a="#56660f" b="#83990f" />
      <P d="M954.500 160V842H969.500L975 838V160M969.500 160V842" />
      {/* rails and belts behind */}
      <g transform="translate(780 140) scale(.36351 .33333)">
        <P d="M535 112H580L535 160Z" f="#2b6b4c" />
        <P d="M468 152L480 146V178Z" f="#901090" />
        <P d="M525 162L1465 283V300L525 178Z" f="#555660" />
        <path d={belts} fill="none" stroke="#080808" strokeWidth="10" />
      </g>
      {/* blue post */}
      <Post x1={1313} xm={1328} x2={1334.500} y1={200} y2={885} a="#00004d" b="#000072" />
      <P d="M1313 200V884L1328 886L1334.500 881V200M1328 200V885" />
      <g transform="translate(780 140) scale(.36351 .33333)">
        {/* rear beam */}
        <P d="M520 52L1490 178L1475 192L520 66Z" f="#8d0f12" />
        <P d="M520 66L1475 190L1425 231L520 109Z" f="#660e10" />
        <Holes at={[[538, 90], [577, 95], [1406, 204], [499, 173], [502, 130], [527, 146]]} />
        {/* left beam */}
        <P d="M42 404L95 362L440 92L490 48L520 64L98 402Z" f="#6c6f79" />
        <P d="M98 402L519 66V108L164 398Z" f="#808296" />
        <path d="M42 404L440 92L490 46L530 52" fill="none" stroke="#050505" strokeWidth="6" />
        <P d="M488 52L530 52V62H505Z" f="#6e7410" />
        <ellipse cx="502" cy="99" rx="3" ry="5" fill="#222" />
        {/* right plate and motor */}
        <P d="M1355 415L1497 432V527L1355 506Z" f="#565863" />
        <path d="M1352 412L1346 385M1400 415Q1440 390 1460 422" stroke="#111" strokeWidth="5" fill="none" />
        <Holes at={[[1475, 447], [1475, 479], [1475, 510], [1380, 426], [1487, 302]]} />
        <P d="M1345 468L1400 432Q1440 425 1450 470Q1452 500 1430 515L1390 550Z" f="#3c8a22" />
        <path d="M1372 444Q1420 450 1420 525M1398 434Q1440 450 1436 510" stroke="#0a3000" strokeWidth="3" fill="none" />
        <ellipse cx="1366" cy="507" rx="39" ry="46" fill="#2f741b" stroke="#050505" strokeWidth="3" />
        {/* left drive bracket */}
        <P d="M474 306L606 323V398L474 384Z" f="#256c50" />
        <P d="M606 310H622V385L606 398Z" f="#14601a" />
        <path d="M535 305Q560 275 585 315" fill="#333" stroke="#080808" strokeWidth="5" />
        <path d="M500 322L542 330L538 388L520 394L498 378Z" fill="#060606" stroke="#333" strokeWidth="3" />
        <path d="M510 390V408M522 390V412" stroke="#111" strokeWidth="4" />
        <Holes at={[[592, 338], [592, 383], [490, 318], [487, 380]]} />
        <path d="M606 360H635" stroke="#080808" strokeWidth="9" />
        <ellipse cx="646" cy="356" rx="13" ry="24" fill="#0d3f92" stroke="#050505" strokeWidth="4" strokeDasharray="5 2" />
        {/* cross carriage */}
        <P d="M755 282L440 535L495 600L493 682L945 335V250Z" f="#4a5c0b" />
        <P d="M760 290L870 300L520 560L440 535Z" f="#435408" />
        <P d="M780 298L832 295L535 548L490 545Z" f="#a09f6c" w={1} />
        <P d="M805 300L850 300L560 560L515 548Z" f="#0c0c06" />
        <P d="M850 300L870 300L590 512L570 510Z" f="#4a5c0b" w={1} />
        <P d="M880 292L943 252V332L493 682V606Z" f="#3e6a00" />
        <P d="M880 292L493 606L470 590L860 296Z" f="#4f7210" w={1} />
        <P d="M755 280L800 238L945 250L890 296Z" f="#5c5e69" />
        <Holes at={[[775, 278], [908, 266], [884, 284], [820, 250]]} />
        <P d="M880 192L925 196L932 208V248L912 260L880 255Z" f="#611c71" />
        <P d="M912 215L918 205L932 208V248L912 260Z" f="#78258c" w={1} />
        <P d="M800 220V272Q835 292 878 278V222Z" f="#347f1c" />
        <P d="M793 135V215Q835 240 884 218V138Z" f="#2c711a" />
        <ellipse cx="838" cy="138" rx="45" ry="15" fill="#33801e" stroke="#050505" strokeWidth="4" />
        <P d="M650 355L705 316V470L650 462Z" f="#b89f28" />
        <P d="M620 425L640 428V448L620 445ZM592 450H610V460H592Z" f="#0b6f80" />
        <path d="M585 462L650 466V452L600 446Z" fill="#20260a" />
        <P d="M655 425L690 430V448L655 446Z" f="#6c6e78" />
        <ellipse cx="695" cy="438" rx="10" ry="18" fill="#333" stroke="#080808" strokeWidth="3" />
        <P d="M680 335H795Q815 350 815 385Q812 430 790 437L680 422Q662 400 668 355Z" f="#2e731a" />
        <ellipse cx="798" cy="388" rx="16" ry="48" fill="#43992b" stroke="#050505" strokeWidth="3" />
        <path d="M726 336Q704 380 722 430" stroke="#050505" strokeWidth="4" fill="none" />
        {/* carriage front end */}
        <P d="M355 590L500 606L493 685L355 668Z" f="#3a4208" w={2} />
        <P d="M362 660L420 640L488 655V680Z" f="#62646e" />
        <P d="M368 632L410 608L418 628L378 662H362V640Z" f="#9b9c62" />
        <ellipse cx="450" cy="632" rx="35" ry="22" fill="#060606" stroke="#444" strokeWidth="2" strokeDasharray="4 3" />
        <ellipse cx="448" cy="612" rx="16" ry="6" fill="#1b8a60" />
        <P d="M470 650H488V676H470Z" f="#8d8f5a" />
        <P d="M357 588L372 578L520 600L498 610L357 594Z" f="#4b4d56" />
      </g>
      <Gripper />
      <g transform="translate(780 140) scale(.36351 .33333)">
        {/* front rail */}
        <P d="M90 504L370 542V558L90 522Z" f="#5d5f6a" />
        <P d="M485 556L1020 622L1024 643L485 578Z" f="#555762" />
        <P d="M372 528L475 536L495 548V590L472 605L370 588V540Z" f="#5c1e6c" />
        <P d="M372 528L475 536L490 550L370 540ZM472 560L482 548L495 550V592L472 605Z" f="#7a2a8c" w={1} />
        <Holes at={[[381, 582], [462, 596]]} />
        {/* front beam */}
        <P d="M90 400L1060 522L1040 536L98 406Z" f="#8d0f12" />
        <P d="M98 406L180 420L940 524L955 562L140 458Z" f="#660e10" />
        <P d="M180 420L940 524L955 566L148 460Z" f="#660e10" />
        {/* right beam */}
        <P d="M1045 520L1475 190L1505 188L1078 534Z" f="#6c6f79" />
        <P d="M1078 534L1500 196L1480 240L1120 542Z" f="#808296" />
        <P d="M1475 190L1490 176L1524 184L1500 194Z" f="#000050" />
      </g>
      {/* lower frame and table */}
      <g transform="translate(770 620) scale(.36994 .33333)">
        <P d="M555 55L590 98H555Z" f="#2b6b4c" />
        <P d="M1452 212L1468 195V215Z" f="#2b6b4c" />
        {/* right cabinet side */}
        <path d="M1190 530L1468 325V705L1190 928Z" fill="#808296" />
        <P d="M1190 530L1468 325M1468 705L1190 928" w={1.900} />
        <P d="M497 103L555 97L1468 215V232L1506 237L1218 470L1175 465V430L824 381L703 473V517L685 527L128 458V403Z" f="#80521c" />
        <P d="M148 458L685 527V552L170 488Z" f="#643f15" />
        <P d="M685 527L703 515V542L685 552Z" f="#9a6221" />
        <P d="M1175 465L1218 470V495L1175 490Z" f="#643f15" />
        <P d="M1218 470L1506 237V262L1218 495Z" f="#9a6221" />
        <path d="M497 103V0H540V107Z" fill="#56660f" />
        <path d="M540 107V0H555V97Z" fill="#83990f" />
        <P d="M497 0V103L540 107L555 97V0M540 0V107" />
        <circle cx="518" cy="65" r="5" fill="#333" stroke="#000" strokeWidth="2" />
        {/* blue post over the table */}
        <path d="M1468 0V232L1508 237V0Z" fill="#00004d" />
        <path d="M1508 0H1525V258L1508 262Z" fill="#000072" />
        <P d="M1468 0V232L1508 237V0M1525 0V258" />
        {/* orange rail */}
        <P d="M1097 555L1175 495H1218L1140 565L1097 592Z" f="#6d2600" />
        <P d="M1130 610V568L1475 294L1484 325Z" f="#832d00" />
        <Holes at={[[1191, 541], [1294, 457], [1370, 396], [1445, 335], [1199, 586], [1199, 897], [1245, 866], [1331, 797], [1418, 727], [1464, 685], [1464, 374]]} />
        <P d="M1470 294L1528 252V404Z" f="#359b69" />
        <Holes at={[[1505, 293], [1488, 305], [1521, 322], [1521, 367]]} />
        {/* chute */}
        <P d="M824 381L1172 430L1097 490V592L824 560Z" f="#50515c" />
        <P d="M703 473L824 381V560L703 545Z" f="#7a7c8c" />
        <P d="M808 425L824 383V558H808Z" f="#666873" />
        <P d="M1097 488L1174 430V500L1097 558Z" f="#838597" />
        {/* lower box */}
        <P d="M703 612L1190 560V928L1097 918L703 852Z" f="#50515c" />
        <P d="M1097 600L1175 560V650L1112 852L1097 862Z" f="#8b8e9e" />
        <P d="M710 616L806 625L762 806L712 845Z" f="#777a87" o={0.9} />
        <P d="M812 620H1042V845L762 806Z" f="#50515c" w={1} />
        <P d="M762 806L1042 845V890L712 848Z" f="#5c5e69" w={0.8} />
        <P d="M806 618L768 700L762 806L824 620" f="#60626d" w={0.8} />
        <P d="M718 815L750 782L762 806L712 845Z" f="#6a6c78" w={1} />
        <P d="M832 615L930 625V668L832 655Z" f="#5c5e69" />
        <Holes at={[[847, 645], [912, 653], [720, 820], [744, 802], [792, 539], [817, 440], [1110, 898], [1173, 879], [1168, 598], [1157, 684], [1122, 798], [770, 755]]} />
        <ellipse cx="866" cy="849" rx="22" ry="25" fill="#555762" stroke="#060606" strokeWidth="3" />
        <path d="M703 852L1042 893M838 880L1042 908" fill="none" stroke="#050505" strokeWidth="8" />
        <path d="M707 612V850" stroke="#050505" strokeWidth="6" />
        <P d="M707 612L1042 658" w={1.8} />
        <P d="M1190 545V930" w={2.200} />
        <P d="M646 598L688 603V642L646 636ZM655 604V630M646 636L684 606" f="#70727f" w={1.600} />
      </g>
      <Post x1={796} xm={811.500} x2={817} y1={310} y2={957} a="#686018" b="#9c8f20" />
      <P d="M796 310V954L811 957L817 952V310M811.500 310V956" />
      <g transform="translate(770 620) scale(.36994 .33333)">
        {/* green front beam */}
        <P d="M692 543L992 580L975 592L688 552Z" f="#046420" />
        <P d="M170 487L988 592L948 632L205 536Z" f="#044b1a" />
        <Holes at={[[832, 607], [898, 615]]} />
        <P d="M71 365L205 536L71 519Z" f="#266548" />
        <Holes at={[[90, 411], [90, 455], [129, 504], [167, 509]]} />
        {/* control box */}
        <P d="M115 527L205 538L468 572L400 808L50 762Z" f="#50515c" />
        <P d="M50 762L400 808V1030L48 984Z" f="#50515c" w={2} />
        <P d="M468 572L486 575V966L402 1030V808Z" f="#797b8c" />
        <path d="M115 527L50 762V984" stroke="#060606" strokeWidth="7" fill="none" />
        <path d="M466 572L402 808V1030" stroke="#060606" strokeWidth="6" fill="none" />
        <Holes at={[[463, 620], [440, 700], [418, 780], [409, 860], [409, 972], [453, 969], [420, 995]]} />
        <ellipse cx="180" cy="658" rx="30" ry="28" fill="#0b0b0b" /><ellipse cx="173" cy="634" rx="35" ry="33" fill="#080808" /><ellipse cx="169" cy="635" rx="24" ry="25" fill="#055c0c" />
        <ellipse cx="334" cy="678" rx="30" ry="28" fill="#0b0b0b" /><ellipse cx="328" cy="656" rx="35" ry="33" fill="#080808" /><ellipse cx="325" cy="657" rx="24" ry="25" fill="#6b2528" />
      </g>
      {/* front right post */}
      <Post x1={1155} xm={1169.500} x2={1176} y1={350} y2={992} a="#686018" b="#9c8f20" />
      <P d="M1155 350V992M1169.500 350V992M1176 350V992" />
      <g transform="translate(770 620) scale(.36994 .33333)">
        <P d="M1078 498V651L946 632Z" f="#266548" />
        <Holes at={[[1059, 539], [1059, 582], [982, 618], [1021, 623], [1088, 903]]} />
        <P d="M1084 606L1140 563L1084 762Z" f="#359b69" />
        <Holes at={[[1108, 611], [1125, 597], [1092, 667], [1092, 712]]} />
      </g>
      <g transform="translate(780 140) scale(.36351 .33333)">
        <P d="M42 404L182 424L42 558Z" f="#266548" />
        <P d="M52 402L66 394L98 397L88 408Z" f="#8a7c1c" />
        <Holes at={[[101, 435], [142, 440], [63, 475], [63, 518]]} />
        <P d="M934 524L1075 540L1070 692Z" f="#266548" />
        <P d="M1075 540L1128 494L1112 560L1070 692Z" f="#8e0893" />
        <P d="M1040 527L1050 519L1085 524L1076 536Z" f="#8a7c1c" />
        <Holes at={[[970, 548], [1009, 553], [1049, 604], [1049, 648], [1107, 536], [1083, 621]]} />
        <P d="M1468 232L1526 182V336Z" f="#8e0893" />
        <Holes at={[[1493, 230], [1517, 277]]} />
      </g>
      {/* axis triad */}
      <path d="M304 918L318 910" stroke="#184d18" strokeWidth="5" />
      <ellipse cx="314" cy="912" rx="5" ry="5" fill="#137a1d" />
      <path d="M306 918L316 911" stroke="#143c14" strokeWidth="4" />
      <path d="M304 919L280 916" stroke="#c41a1a" strokeWidth="4" />
      <path d="M269 916L281 910V922Z" fill="#a21616" />
      <path d="M304 919V946" stroke="#1717b4" strokeWidth="5" />
      <path d="M298 944H310L304 956Z" fill="#141488" />
      <path d="M262 909L267 920M267 909L262 920" stroke="#f01818" strokeWidth="1.200" />
      <path d="M316 901L318.500 905L321 901M318.500 905L317 910" stroke="#118a18" strokeWidth="1.200" fill="none" />
      <path d="M301 956H306L301 965H306" stroke="#1414e0" strokeWidth="1.200" fill="none" />
    </svg>
  );
}

/* ---------- bottom bars ---------- */
function BottomTabs() {
  const nav = ["M6 5V15M14 5L8 10L14 15Z", "M13 5L6 10L13 15Z", "M7 5L14 10L7 15Z", "M6 5L12 10L6 15ZM14 5V15"];
  return (
    <div className="flex h-[21px] shrink-0 border-y border-[#858585] text-[15px] leading-[16px] text-black">
      <div className="w-[27px]" />
      {nav.map((d) => (
        <div key={d} className="w-5 border border-[#85879c] bg-[#a5a7bd]"><Ico box="0 0 20 20" className="size-[18px]"><path d={d} fill="#85879c" stroke="#85879c" strokeWidth="1.500" /></Ico></div>
      ))}
      <Fit className="ml-[15px] w-[35px]">ﾓﾃﾞﾙ</Fit>
      <div className="ml-[12px] w-[74px] border-x border-[#858585] bg-[#9e9e9e] pl-[8px]"><Fit className="w-[54px]">3D ﾋﾞｭｰ</Fit></div>
      <div className="w-[131px] border-r border-[#858585] bg-[#9e9e9e] pl-[8px]"><Fit className="w-[103px]">ﾓｰｼｮﾝ ｽﾀﾃﾞｨ 1</Fit></div>
    </div>
  );
}
function TaskPane() {
  const box = "flex h-[29px] w-[34px] items-center justify-center border-r border-[#858585]";
  return (
    <div className="absolute right-0 bottom-[50px] z-10 w-[300px]">
      <div className="flex w-[239px] border-t border-l border-[#858585]">
        <div className={`${box} bg-[#b4b4b4]`}><Home /></div>
        <div className={`${box} bg-[#9e9e9e]`}><Ico className={halo + " size-5"}><path d="M2 5L6 3V19L2 17ZM6 5L11 3V21L7 19M11 5L16 3V22L11 20M16 5L21 3V18L16 22" fill="#eee" stroke="#333" strokeWidth="1.400" /></Ico></div>
        <div className={`${box} bg-[#9e9e9e]`}><Ico className={halo + " size-5"}><path d="M2 21V3H9L11 6H19V9" fill="#ddd" stroke="#444" strokeWidth="1.300" /><path d="M3 21L8 9H23L18 21Z" fill="#f3f3f3" stroke="#444" strokeWidth="1.300" /></Ico></div>
        <div className={`${box} bg-[#9e9e9e]`}><Ico className={halo + " size-5"}><rect x="1.500" y="2.500" width="21" height="19" fill="#f5f5f5" stroke="#333" strokeWidth="1.400" /><path d="M5 5.500H14V9H5ZM17 5.500H20V9H17ZM8 12H12V15H16V19H4V15H8Z" fill="#f2c61c" stroke="#6a5000" /><path d="M18 12H21V20H18Z" fill="#999" /></Ico></div>
        <div className={`${box} bg-[#9e9e9e]`}><Ball /></div>
        <div className={`${box} bg-[#9e9e9e]`}><Panel /></div>
        <div className={`${box} bg-[#9e9e9e]`}><Ico className={halo + " size-5"}><path d="M1 3H15V13H8L4 17V13H1Z" fill="#4a9cc6" stroke="#14506e" /><path d="M10 9H23V18H20V22L16 18H10Z" fill="#e6e6e6" stroke="#444" /></Ico></div>
      </div>
      <div className="flex h-[17px] items-end overflow-hidden border border-[#858585] bg-[#b4b4b4] px-[2px] pb-[3px]">
        <div className="flex h-[12px] w-full overflow-hidden bg-[#abadb1] pl-[63px]">
          <Fit className="mt-[6px] w-[127px] text-[15px] leading-[14px] font-bold text-black">SOLIDWORKS ﾘｿｰｽ</Fit>
          <Ico box="0 0 8 12" className="ml-[70px] h-3 w-2"><path d="M1 5L7 11H1Z" fill="#222" /></Ico>
          <div className="ml-[4px] mt-[5px] h-4 w-[18px] border border-[#333] bg-[#eee]"><div className="ml-[11px] h-full border-l border-[#333]" /></div>
        </div>
      </div>
    </div>
  );
}
function StatusBar() {
  return (
    <div className="flex h-[21px] shrink-0 items-center text-[15.500px] leading-[20px] text-black">
      <Fit className="ml-px w-[312px] pt-[2px]">SOLIDWORKS Student Edition - 学究的使用のみ</Fit>
      <div className="ml-[1132px] -mt-[3px]"><Err small /></div>
      <Fit className="ml-[3px] w-[83px] pt-[2px] text-[#f40000]">解決結果なし</Fit>
      <div className="ml-[5px] h-[19px] w-px bg-[#ddd]" />
      <div className="ml-[7px] h-[19px] w-px bg-[#ddd]" />
      <Fit className="ml-[4px] w-[60px] pt-[2px]">編集中：</Fit>
    </div>
  );
}

/* ---------- Windows taskbar ---------- */
const App_ = ({ children, line = false, bg = "", lineBg = "bg-[#76b9ed]", wide = false }: { children: ReactNode; line?: boolean; bg?: string; lineBg?: string; wide?: boolean }) => (
  <div className={`relative flex h-full w-[62px] shrink-0 items-center justify-center ${bg}`}>
    {children}
    {line && <div className={`absolute bottom-0 h-[3px] ${lineBg} ${wide ? "w-full" : "w-[51px]"}`} />}
  </div>
);
function Taskbar() {
  return (
    <footer className="flex h-[50px] shrink-0 items-center bg-[#1c1c1c] text-white">
      <div className="flex w-[60px] justify-center">
        <Ico className="size-5" box="0 0 20 20"><path d="M0 3L9 1.700V9.500H0ZM10 1.500L20 0V9.500H10ZM0 10.500H9V18.300L0 17ZM10 10.500H20V20L10 18.500Z" fill="#fff" /></Ico>
      </div>
      <div className="flex h-full w-[430px] items-center border-y border-[#ccc] bg-[#f2f2f2] text-[#333]">
        <Ico className="ml-[13px] size-6"><circle cx="15" cy="9" r="6.300" stroke="#222" strokeWidth="1.600" /><path d="M10.500 13.500L2 22" stroke="#222" strokeWidth="1.800" /></Ico>
        <Fit className="ml-[12px] w-[142px] text-[18px] leading-[30px]">ここに入力して検索</Fit>
      </div>
      <div className="flex w-[60px] justify-center"><div className="size-[19px] rounded-full border-[2.500px] border-white" /></div>
      <div className="flex w-[60px] justify-center"><Ico className="size-5"><path d="M2 1V5H15V1M2 23V19H15V23M2 8H15V16H2ZM20 1V8M20 13V23" stroke="#fff" strokeWidth="1.600" /><path d="M18.500 9H21.500V12H18.500Z" fill="#fff" /></Ico></div>
      <div className="ml-[6px] flex h-[26px] w-[4px] border-x border-[#555]" />
      <div className="ml-[13px] flex h-full">
        <App_>
          <div className="flex size-[30px] items-center justify-center rounded-[4px] bg-[#00b900]"><Ico className="size-[26px]"><path d="M12 2C5 2 1.500 6 1.500 10.500C1.500 15 6 18 11.500 19V22.500C16 20 22.500 16 22.500 10.500C22.500 6 19 2 12 2Z" fill="#fff" /><path d="M5 8V13H7.500M9.500 8V13M12 13V8L15 13V8M20 8H17.500V13H20M17.500 10.500H20" stroke="#00b900" strokeWidth="1.300" /></Ico></div>
        </App_>
        <App_ line><Ico className="size-7"><path d="M0 2H10L12 4H24V20H0Z" fill="#ffd35a" /><path d="M0 2H10L11 5H0Z" fill="#d99a1c" /><path d="M5 22V13Q5 11 7 11H17Q19 11 19 13V22H15V17H9V22Z" fill="#2f8fdc" /></Ico></App_>
        <App_>
          <Ico className="size-[30px]"><path d="M0 9L12 0L24 9V23H0Z" fill="#d33a2f" /><path d="M4 7H20V15L12 19L4 15Z" fill="#fff" /><path d="M15 9Q10 7 9.500 12Q10 16 15 14V12H12" stroke="#d33a2f" strokeWidth="2" /><path d="M0 9L12 18L24 9V23H0Z" fill="#b8332a" opacity=".6" /></Ico>
          <div className="absolute right-[1px] bottom-[6px] flex h-[20px] w-[36px] items-center justify-center rounded-full border border-[#888] bg-[#222]/80 text-[15px] font-bold">99+</div>
        </App_>
        <App_>
          <div className="flex size-[28px] items-center justify-center rounded-full bg-[#f4f4f4]"><Ico className="size-5"><g strokeWidth="4.200" strokeLinecap="round"><path d="M9 4V9M4 9.500H5" stroke="#36c5f0" /><path d="M15 3V9M20 9H20.500" stroke="#2eb67d" /><path d="M3 15H9M9.500 20V20.500" stroke="#e01e5a" /><path d="M15 15H21M15 20V20.500" stroke="#ecb22e" /></g></Ico></div>
        </App_>
        <App_ line><Ico className="size-[29px]"><path d="M6 1H24V7H6Z" fill="#41a5ee" /><path d="M6 7H24V13H6Z" fill="#2b7cd3" /><path d="M6 13H24V18H6Z" fill="#185abd" /><path d="M6 18H24V23H6Z" fill="#103f91" /><path d="M0 6H13V18H0Z" fill="#185abd" /><path d="M3 9L4.500 15L6.500 10L8.500 15L10 9" stroke="#fff" strokeWidth="1.600" /></Ico></App_>
        <App_ line wide bg="bg-[#a65e28]" lineBg="bg-[#ff7800]"><Ico className="size-[30px]"><circle cx="12" cy="12" r="12" fill="#1ed760" /><path d="M5 8Q12 5.500 19.500 9.500M5.500 12Q12 10 18 13.500M6.500 15.800Q12 14 17 17" stroke="#111" strokeWidth="2.100" strokeLinecap="round" /></Ico></App_>
        <App_ line><Ico className="size-[28px]"><circle cx="12" cy="13" r="11" fill="#ff7a1a" /><path d="M1 12Q1 5 5 3L7 6L12 8L10 12Q12 16 17 14Q20 11 17 5Q20 8 20 1Q24 8 23 14Q21 24 12 24Q2 24 1 12Z" fill="#ff4a2a" /><path d="M17 4Q19 2 19 0Q24 8 23 14Q21 22 15 23Q22 16 17 4Z" fill="#ffd02a" /><circle cx="12" cy="11" r="5.500" fill="#3a55d8" /><path d="M5 9L11 9L9 12Q12 16 17 13Q15 18 10 17Q5 15 5 9Z" fill="#ff9a1a" /></Ico></App_>
        <App_><div className="flex size-[30px] items-center justify-center rounded-[3px] bg-[#4a4a4a]"><Ico className="size-[22px]"><path d="M4 7L20 2V7L11 10L20 13V17L4 22V17L13 14L4 11Z" fill="#ff9800" /></Ico></div></App_>
        <App_><div className="flex size-[30px] items-center justify-center rounded-full bg-[#e95420]"><Ico className="size-[24px]"><circle cx="13" cy="12" r="6" stroke="#fff" strokeWidth="3" strokeDasharray="10 2.500" /><circle cx="3.500" cy="12" r="2.200" fill="#fff" /><circle cx="17.500" cy="4" r="2.200" fill="#fff" /><circle cx="17.500" cy="20" r="2.200" fill="#fff" /></Ico></div></App_>
        <App_ line wide bg="bg-[#4a4a4a]">
          <Ico className="-ml-[2px] size-[30px]"><path d="M1 4L12 0L23 4V18L12 23L1 18Z" fill="#c8141e" /><path d="M12 8L23 4V18L12 23Z" fill="#8c0c14" /><path d="M1 4L12 8L23 4" stroke="#e8787c" strokeWidth=".8" /></Ico>
          <div className="absolute top-[15px] left-[16px] flex flex-col">
            <Fit className="w-[26px] text-[15px] leading-[16px] font-extrabold">SW</Fit>
            <Fit className="ml-[12px] w-[17px] text-[9px] leading-[11px] font-extrabold">2018</Fit>
          </div>
        </App_>
      </div>
      <div className="ml-[227px] h-[26px] w-[4px] border-x border-[#555]" />
      <Fit className="ml-[10px] w-[65px] text-[15px] leading-[30px] text-[#ddd]">デスクトップ</Fit>
      <span className="ml-[9px] w-3 -translate-y-[14px] text-[18px] leading-[20px] font-bold">»</span>
      <Ico className="ml-[10px] size-[18px]"><path d="M2 17L12 7L22 17" stroke="#fff" strokeWidth="2" /></Ico>
      <Ico className="ml-[12px] size-5"><path d="M4 22A18 18 0 0 1 21 4M8 22A14 14 0 0 1 21 9M12 22A10 10 0 0 1 21 14" stroke="#ddd" strokeWidth="1.800" /><circle cx="19" cy="20.500" r="2" fill="#fff" /></Ico>
      <Ico className="ml-[9px] size-5"><path d="M5 18Q0 18 0 14Q1 10 5 10Q8 4 14 7Q18 6 19 11Q24 11 24 15Q24 18 21 18Z" fill="#eee" /><path d="M0 14Q1 10 5 10Q8 4 14 7L8 13Z" fill="#bbb" /></Ico>
      <Ico className="ml-[10px] size-5"><path d="M6 7H23V18H6V13M23 10H24.500V15H23M1 3V7M5 3V7M3 9V14H6" stroke="#fff" strokeWidth="1.500" /><path d="M8.500 9.500H20.500V15.500H8.500ZM0 6H6V10H0Z" fill="#fff" /></Ico>
      <Ico className="ml-[9px] size-5"><path d="M1 9H5L10 5V19L5 15H1Z" stroke="#fff" strokeWidth="1.600" /><path d="M13 9Q15 12 13 15" stroke="#fff" strokeWidth="1.600" /><path d="M16 7Q19 12 16 17M19 4Q24 12 19 20" stroke="#777" strokeWidth="1.600" /></Ico>
      <span className="ml-[12px] w-[16px] text-[22px] leading-[30px]">A</span>
      <div className="ml-[13px] flex w-[78px] flex-col items-center text-[15px] leading-[22px]">
        <Fit className="w-[35px]">14:49</Fit>
        <Fit className="w-[76px]">2019/09/29</Fit>
      </div>
      <div className="relative ml-[22px] size-[30px]">
        <Ico className="mt-[3px] size-[21px]"><path d="M0 0H23V19H10L4 24V19H0Z" fill="#fff" /><path d="M4 6H19M4 10H19M4 14H14" stroke="#1c1c1c" strokeWidth="1.500" /></Ico>
        <div className="absolute top-[12px] left-[8px] flex size-[23px] items-center justify-center rounded-full border border-[#888] bg-[#333] text-[14px] font-bold">26</div>
      </div>
      <div className="ml-auto h-full w-[6px] border-l border-[#666]" />
    </footer>
  );
}

export default function App() {
  return (
    <div className="relative flex h-[1080px] w-[1920px] flex-col overflow-hidden bg-[#b4b4b4] font-['Open_Sans','Noto_Sans_CJK_JP',sans-serif]">
      <TitleBar />
      <Ribbon />
      <TabRow />
      <div className="flex h-[840px] shrink-0">
        <TreePanel />
        <main className="relative flex-1 overflow-hidden bg-[#a5abbb]">
          <Model />
          <div className="absolute top-[381px] left-0 flex h-[49px] w-[10px] items-center justify-center border-y border-r border-[#858585] bg-[#b4b4b4]">
            <div className="size-[6px] rounded-full border border-[#ddd] bg-[#999]" />
          </div>
        </main>
      </div>
      <BottomTabs />
      <StatusBar />
      <Taskbar />
      <TaskPane />
    </div>
  );
}
